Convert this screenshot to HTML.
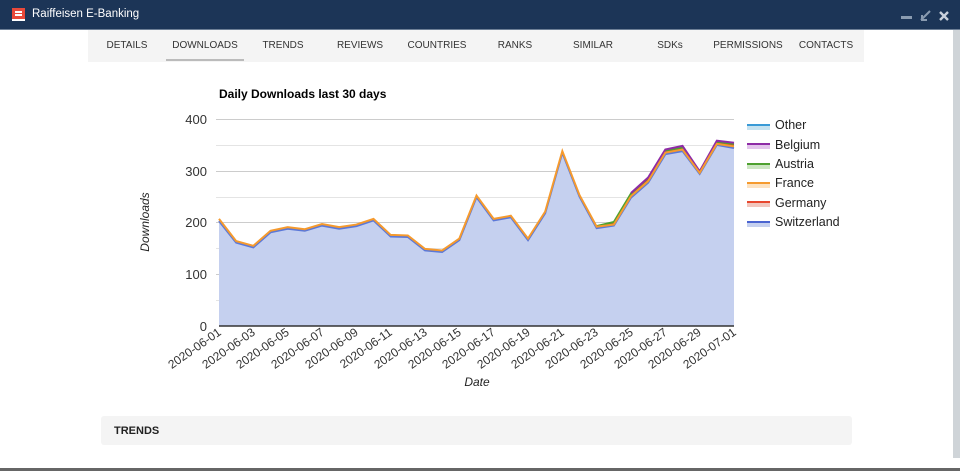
<!DOCTYPE html>
<html><head><meta charset="utf-8"><style>
body{margin:0;width:960px;height:471px;overflow:hidden;background:#fff;font-family:"Liberation Sans",Arial,sans-serif;position:relative}
.top{position:absolute;left:0;top:0;width:960px;height:29px;background:#1c3557;border-bottom:1px solid #6d7f96}
.top .t{position:absolute;left:32px;top:8px;color:#fff;font-size:11.5px}
.nav{position:absolute;left:88px;top:30px;width:776px;height:32px;background:#f4f4f4}
.nav span{position:absolute;top:10px;font-size:10px;color:#333;transform:translateX(-50%);white-space:nowrap}
.trends{position:absolute;left:101px;top:416px;width:751px;height:29px;background:#f4f4f4;border-radius:3px}
.trends b{position:absolute;left:13px;top:9px;font-size:11px;color:#222}
.rs{position:absolute;left:953px;top:30px;width:7px;height:428px;background:#cfd4d8}
.bot{position:absolute;left:0;top:468px;width:960px;height:3px;background:#666}
svg text{font-family:"Liberation Sans",Arial,sans-serif}
</style></head><body>
<div class="top"><svg style="position:absolute;left:12px;top:8px" width="13" height="13"><rect width="13" height="11" fill="#e8493a"/><rect x="3" y="3" width="7" height="2" fill="#fff"/><rect x="3" y="6" width="7" height="2" fill="#fff"/><rect y="11" width="13" height="2" fill="#fff"/></svg><div class="t">Raiffeisen E-Banking</div>
<svg style="position:absolute;left:900px;top:10px" width="50" height="12"><rect x="1" y="6" width="11" height="3" fill="#8a9bb0"/><path d="M21 10 L30 1 M22 5v5h5" stroke="#8a9bb0" stroke-width="2" fill="none"/><path d="M40 2 L48 10 M48 2 L40 10" stroke="#c8d0db" stroke-width="2.4"/></svg></div>
<div class="nav">
<span style="left:39px">DETAILS</span><span style="left:117px">DOWNLOADS</span><span style="left:195px">TRENDS</span><span style="left:272px">REVIEWS</span><span style="left:349px">COUNTRIES</span><span style="left:427px">RANKS</span><span style="left:505px">SIMILAR</span><span style="left:582px">SDKs</span><span style="left:660px">PERMISSIONS</span><span style="left:738px">CONTACTS</span>
<div style="position:absolute;left:78px;top:29px;width:78px;height:2px;background:#bbb"></div></div>
<div class="rs"></div>
<svg style="position:absolute;left:0;top:0" width="960" height="471">
<text x="219" y="98" font-size="12" font-weight="bold" fill="#000">Daily Downloads last 30 days</text>
<g stroke="#e4e4e4" stroke-width="1">
<line x1="216" x2="734" y1="119.5" y2="119.5" stroke="#ccc"/><line x1="216" x2="734" y1="145.5" y2="145.5"/><line x1="216" x2="734" y1="171.5" y2="171.5" stroke="#ccc"/><line x1="216" x2="734" y1="197.5" y2="197.5"/><line x1="216" x2="734" y1="222.5" y2="222.5" stroke="#ccc"/><line x1="216" x2="734" y1="248.5" y2="248.5"/><line x1="216" x2="734" y1="274.5" y2="274.5" stroke="#ccc"/><line x1="216" x2="734" y1="300.5" y2="300.5"/></g>
<g font-size="13" fill="#333" text-anchor="end"><text x="207" y="124">400</text><text x="207" y="176">300</text><text x="207" y="227">200</text><text x="207" y="279">100</text><text x="207" y="331">0</text></g>
<g transform="translate(219,326) scale(17.1667,-0.5175)">
<polygon fill="#c5d0ef" points="0,0 0,203 1,161 2,152 3,181 4,188 5,184 6,194 7,188 8,193 9,204 10,173 11,172 12,146 13,143 14,166 15,249 16,204 17,210 18,166 19,218 20,335 21,250 22,189 23,194 24,248 25,277 26,332 27,338 28,294 29,350 30,344 30,0"/>
<polyline fill="none" stroke="#e8472e" stroke-width="2" vector-effect="non-scaling-stroke" points="22,192 23,198 24,253 25,283 26,337 27,343 28,297 29,354 30,350"/>
<polyline fill="none" stroke="#4ea12f" stroke-width="2" vector-effect="non-scaling-stroke" points="22,193 23,201 24,256 25,286 26,339 27,345 28,298 29,356 30,352"/>
<polyline fill="none" stroke="#8e2ba6" stroke-width="2" vector-effect="non-scaling-stroke" points="24,257 25,287 26,341 27,348 28,299 29,358 30,354"/>
<polyline fill="none" stroke="#5b78d8" stroke-width="2" vector-effect="non-scaling-stroke" points="0,203 1,161 2,152 3,181 4,188 5,184 6,194 7,188 8,193 9,204 10,173 11,172 12,146 13,143 14,166 15,249 16,204 17,210 18,166 19,218 20,335 21,250 22,189 23,194 24,248 25,277 26,332 27,338 28,294 29,350 30,344"/>
<polyline fill="none" stroke="#f59a2e" stroke-width="2" vector-effect="non-scaling-stroke" points="0,207 1,164 2,155 3,184 4,191 5,187 6,197 7,191 8,196 9,207 10,176 11,175 12,149 13,146 14,169 15,252 16,207 17,213 18,169 19,221 20,338 21,253 22,192 23,196 24,251 25,280 26,335 27,341 28,296 29,352 30,347"/>
</g>
<line x1="219" x2="734" y1="326" y2="326" stroke="#333" stroke-width="1.5"/>
<g font-size="12" fill="#333" text-anchor="end">
<text transform="translate(222,334) rotate(-35)">2020-06-01</text><text transform="translate(256,334) rotate(-35)">2020-06-03</text><text transform="translate(290,334) rotate(-35)">2020-06-05</text><text transform="translate(325,334) rotate(-35)">2020-06-07</text><text transform="translate(359,334) rotate(-35)">2020-06-09</text><text transform="translate(393,334) rotate(-35)">2020-06-11</text><text transform="translate(428,334) rotate(-35)">2020-06-13</text><text transform="translate(462,334) rotate(-35)">2020-06-15</text><text transform="translate(496,334) rotate(-35)">2020-06-17</text><text transform="translate(531,334) rotate(-35)">2020-06-19</text><text transform="translate(565,334) rotate(-35)">2020-06-21</text><text transform="translate(599,334) rotate(-35)">2020-06-23</text><text transform="translate(634,334) rotate(-35)">2020-06-25</text><text transform="translate(668,334) rotate(-35)">2020-06-27</text><text transform="translate(702,334) rotate(-35)">2020-06-29</text><text transform="translate(737,334) rotate(-35)">2020-07-01</text></g>
<text x="477" y="386" font-size="12" font-style="italic" text-anchor="middle" fill="#222">Date</text>
<text transform="translate(149,222) rotate(-90)" font-size="12" font-style="italic" text-anchor="middle" fill="#222">Downloads</text>
<g font-size="12.5" fill="#222">
<rect x="747" y="124" width="23" height="6" fill="#c6e2f0"/><rect x="747" y="124" width="23" height="2" fill="#3a9ad6"/><text x="775" y="129">Other</text>
<rect x="747" y="143" width="23" height="6" fill="#e3c4ec"/><rect x="747" y="143" width="23" height="2" fill="#8e2ba6"/><text x="775" y="149">Belgium</text>
<rect x="747" y="163" width="23" height="6" fill="#cce6c2"/><rect x="747" y="163" width="23" height="2" fill="#4ea12f"/><text x="775" y="168">Austria</text>
<rect x="747" y="182" width="23" height="6" fill="#fde2c0"/><rect x="747" y="182" width="23" height="2" fill="#f59a2e"/><text x="775" y="187">France</text>
<rect x="747" y="201" width="23" height="6" fill="#f2c6bd"/><rect x="747" y="201" width="23" height="2" fill="#e8472e"/><text x="775" y="207">Germany</text>
<rect x="747" y="221" width="23" height="6" fill="#c5d0ef"/><rect x="747" y="221" width="23" height="2" fill="#4a64d0"/><text x="775" y="226">Switzerland</text>
</g></svg>
<div class="trends"><b>TRENDS</b></div>
<div class="bot"></div>
</body></html>
